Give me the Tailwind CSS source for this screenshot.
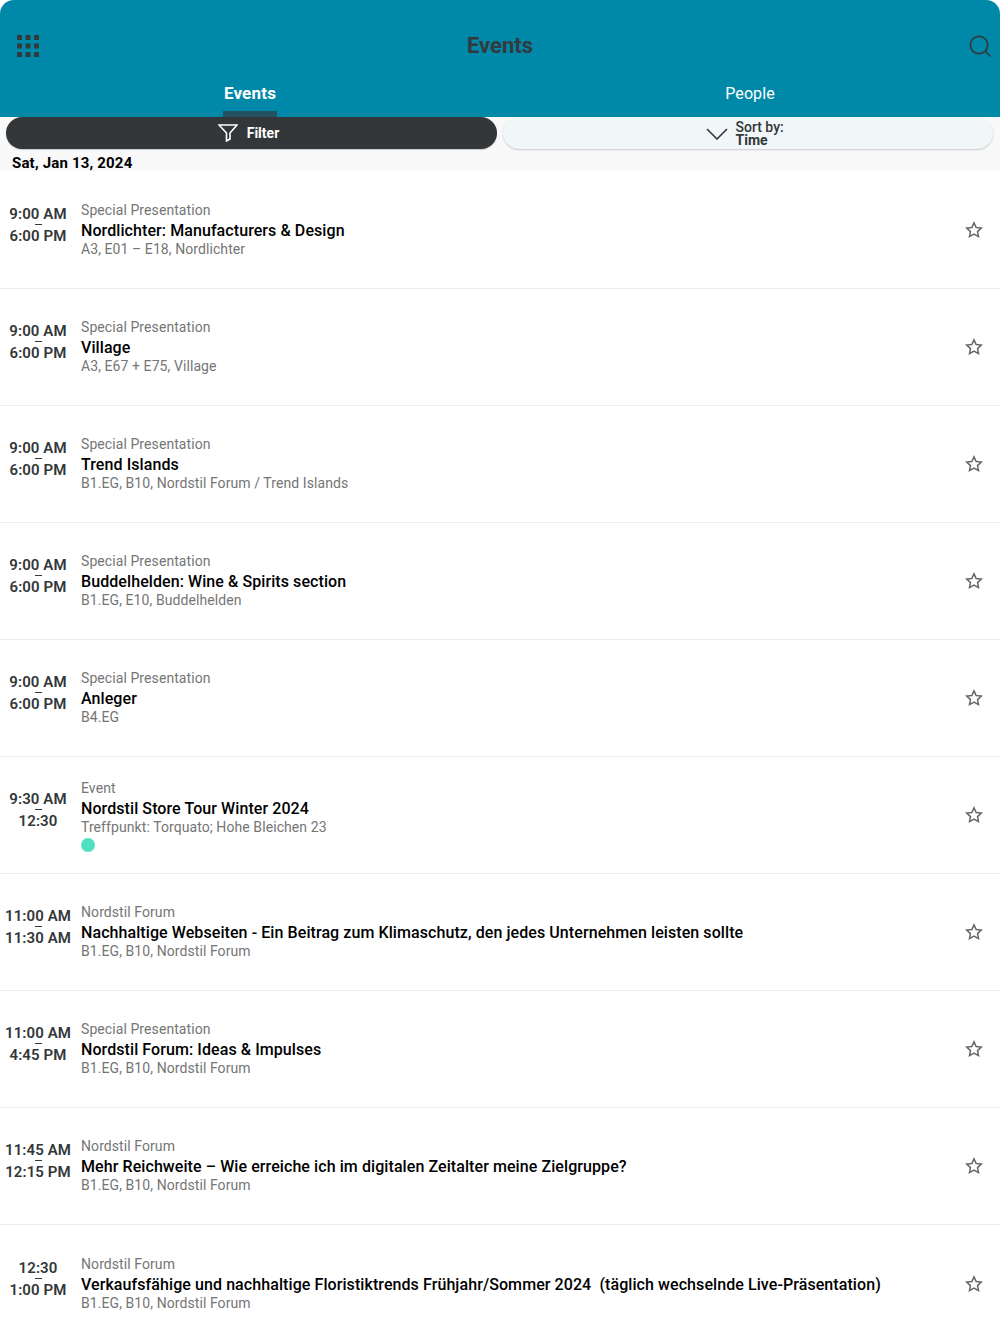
<!DOCTYPE html>
<html>
<head>
<meta charset="utf-8">
<script src="https://cdn.jsdelivr.net/npm/@tailwindcss/browser@4"></script>
</head>
<body class="bg-white overflow-hidden font-['Roboto',sans-serif]">
<div class="w-[1000px] h-[1334px] overflow-hidden">
  <header class="h-[117px] bg-[#0088a9] rounded-t-[14px] flex flex-col">
    <div class="h-[75px] pt-[16px] grid grid-cols-[1fr_auto_1fr] items-center pl-[17px] pr-[9px]">
      <svg class="w-[22px] h-[22px]" viewBox="0 0 22 22" fill="#333a3d">
        <rect x="0" y="0" width="5" height="5"/><rect x="8.5" y="0" width="5" height="5"/><rect x="17" y="0" width="5" height="5"/>
        <rect x="0" y="8.5" width="5" height="5"/><rect x="8.5" y="8.5" width="5" height="5"/><rect x="17" y="8.5" width="5" height="5"/>
        <rect x="0" y="17" width="5" height="5"/><rect x="8.5" y="17" width="5" height="5"/><rect x="17" y="17" width="5" height="5"/>
      </svg>
      <h1 class="text-[22px] font-bold text-[#333a3d] ml-[-8px]">Events</h1>
      <svg class="w-[22px] h-[22px] justify-self-end" viewBox="0 0 22 22" fill="none" stroke="#333a3d" stroke-width="1.7" stroke-linecap="round">
        <circle cx="10" cy="10" r="8.7"/><path d="M16.5 16.5 L21 21"/>
      </svg>
    </div>
    <nav class="flex-1 flex">
      <div class="w-1/2 flex flex-col items-center">
        <span class="text-[17px] leading-[20px] mt-[8px] font-bold text-white tracking-[0.2px]">Events</span>
        <span class="mt-auto w-[54px] h-[6px] bg-[#24505f]"></span>
      </div>
      <div class="w-1/2 flex flex-col items-center">
        <span class="text-[16px] leading-[20px] mt-[9px] text-white tracking-[0.1px]">People</span>
      </div>
    </nav>
  </header>
  <div class="h-[54px] bg-[#f9f9f9] relative">
    <div class="flex gap-[6px] pl-[6px] pr-[7px]">
      <button class="w-[491px] h-[32px] rounded-full bg-[#333739] text-white flex items-center justify-center gap-[9px] shadow-[0_1px_1px_rgba(0,0,0,0.2)] pr-[6px]">
        <svg class="w-[20px] h-[18px]" viewBox="0 0 20 18" fill="none" stroke="#fff" stroke-width="1.6" stroke-linejoin="miter"><path d="M1 1 H19 L12 9 V15 L8.5 17 V9 Z"/></svg>
        <span class="text-[14px] font-bold">Filter</span>
      </button>
      <button class="w-[490px] h-[32px] rounded-full bg-[#f1f6f9] text-[#333739] flex items-center justify-center gap-[8px] shadow-[0_1px_2px_rgba(0,0,0,0.2)] pr-[7px]">
        <svg class="w-[22px] h-[12px] mt-[1px]" viewBox="0 0 22 12" fill="none" stroke="#333739" stroke-width="1.6"><path d="M1 1 L11 11 L21 1"/></svg>
        <span class="flex flex-col text-left text-[14px] leading-[13.5px] w-[48px] mt-[2px] whitespace-nowrap"><span class="font-medium">Sort by:</span><span class="font-bold">Time</span></span>
      </button>
    </div>
    <div class="pl-[12px] mt-[5px] text-[15px] leading-[18px] font-bold text-black tracking-[0.18px]">Sat, Jan 13, 2024</div>
  </div>

  <main class="pt-px">
    <article class="h-[117px] border-b border-[#ececec] flex items-center">
      <div class="w-[75px] mb-[10px] shrink-0 text-center text-[#333739] text-[15px] font-semibold tracking-[0.1px] leading-[22px] relative pl-[1px]"><div>9:00 AM</div><div>6:00 PM</div><span class="absolute left-[35px] top-[21px] w-[7px] h-px bg-[#333739]"></span></div>
      <div class="ml-[6px] flex-1 tracking-[0.08px]"><div class="text-[14px] leading-[19px] text-[#757575]">Special Presentation</div><div class="text-[16px] leading-[20px] mt-px font-medium text-black">Nordlichter: Manufacturers &amp; Design</div><div class="text-[14px] leading-[19px] mt-[-1px] text-[#757575]">A3, E01 – E18, Nordlichter</div></div>
      <svg class="w-[18px] h-[18px] mr-[17px]" viewBox="0 0 24 24" fill="none" stroke="#666" stroke-width="2"><path d="M12 2.5l2.9 6.2 6.8.8-5 4.6 1.3 6.7-6-3.4-6 3.4 1.3-6.7-5-4.6 6.8-.8z"/></svg>
    </article>
    <article class="h-[117px] border-b border-[#ececec] flex items-center">
      <div class="w-[75px] mb-[10px] shrink-0 text-center text-[#333739] text-[15px] font-semibold tracking-[0.1px] leading-[22px] relative pl-[1px]"><div>9:00 AM</div><div>6:00 PM</div><span class="absolute left-[35px] top-[21px] w-[7px] h-px bg-[#333739]"></span></div>
      <div class="ml-[6px] flex-1 tracking-[0.08px]"><div class="text-[14px] leading-[19px] text-[#757575]">Special Presentation</div><div class="text-[16px] leading-[20px] mt-px font-medium text-black">Village</div><div class="text-[14px] leading-[19px] mt-[-1px] text-[#757575]">A3, E67 + E75, Village</div></div>
      <svg class="w-[18px] h-[18px] mr-[17px]" viewBox="0 0 24 24" fill="none" stroke="#666" stroke-width="2"><path d="M12 2.5l2.9 6.2 6.8.8-5 4.6 1.3 6.7-6-3.4-6 3.4 1.3-6.7-5-4.6 6.8-.8z"/></svg>
    </article>
    <article class="h-[117px] border-b border-[#ececec] flex items-center">
      <div class="w-[75px] mb-[10px] shrink-0 text-center text-[#333739] text-[15px] font-semibold tracking-[0.1px] leading-[22px] relative pl-[1px]"><div>9:00 AM</div><div>6:00 PM</div><span class="absolute left-[35px] top-[21px] w-[7px] h-px bg-[#333739]"></span></div>
      <div class="ml-[6px] flex-1 tracking-[0.08px]"><div class="text-[14px] leading-[19px] text-[#757575]">Special Presentation</div><div class="text-[16px] leading-[20px] mt-px font-medium text-black">Trend Islands</div><div class="text-[14px] leading-[19px] mt-[-1px] text-[#757575]">B1.EG, B10, Nordstil Forum / Trend Islands</div></div>
      <svg class="w-[18px] h-[18px] mr-[17px]" viewBox="0 0 24 24" fill="none" stroke="#666" stroke-width="2"><path d="M12 2.5l2.9 6.2 6.8.8-5 4.6 1.3 6.7-6-3.4-6 3.4 1.3-6.7-5-4.6 6.8-.8z"/></svg>
    </article>
    <article class="h-[117px] border-b border-[#ececec] flex items-center">
      <div class="w-[75px] mb-[10px] shrink-0 text-center text-[#333739] text-[15px] font-semibold tracking-[0.1px] leading-[22px] relative pl-[1px]"><div>9:00 AM</div><div>6:00 PM</div><span class="absolute left-[35px] top-[21px] w-[7px] h-px bg-[#333739]"></span></div>
      <div class="ml-[6px] flex-1 tracking-[0.08px]"><div class="text-[14px] leading-[19px] text-[#757575]">Special Presentation</div><div class="text-[16px] leading-[20px] mt-px font-medium text-black">Buddelhelden: Wine &amp; Spirits section</div><div class="text-[14px] leading-[19px] mt-[-1px] text-[#757575]">B1.EG, E10, Buddelhelden</div></div>
      <svg class="w-[18px] h-[18px] mr-[17px]" viewBox="0 0 24 24" fill="none" stroke="#666" stroke-width="2"><path d="M12 2.5l2.9 6.2 6.8.8-5 4.6 1.3 6.7-6-3.4-6 3.4 1.3-6.7-5-4.6 6.8-.8z"/></svg>
    </article>
    <article class="h-[117px] border-b border-[#ececec] flex items-center">
      <div class="w-[75px] mb-[10px] shrink-0 text-center text-[#333739] text-[15px] font-semibold tracking-[0.1px] leading-[22px] relative pl-[1px]"><div>9:00 AM</div><div>6:00 PM</div><span class="absolute left-[35px] top-[21px] w-[7px] h-px bg-[#333739]"></span></div>
      <div class="ml-[6px] flex-1 tracking-[0.08px]"><div class="text-[14px] leading-[19px] text-[#757575]">Special Presentation</div><div class="text-[16px] leading-[20px] mt-px font-medium text-black">Anleger</div><div class="text-[14px] leading-[19px] mt-[-1px] text-[#757575]">B4.EG</div></div>
      <svg class="w-[18px] h-[18px] mr-[17px]" viewBox="0 0 24 24" fill="none" stroke="#666" stroke-width="2"><path d="M12 2.5l2.9 6.2 6.8.8-5 4.6 1.3 6.7-6-3.4-6 3.4 1.3-6.7-5-4.6 6.8-.8z"/></svg>
    </article>
    <article class="h-[117px] border-b border-[#ececec] flex items-center">
      <div class="w-[75px] mb-[10px] shrink-0 text-center text-[#333739] text-[15px] font-semibold tracking-[0.1px] leading-[22px] relative pl-[1px]"><div>9:30 AM</div><div>12:30</div><span class="absolute left-[35px] top-[21px] w-[7px] h-px bg-[#333739]"></span></div>
      <div class="ml-[6px] flex-1 tracking-[0.08px]"><div class="text-[14px] leading-[19px] text-[#757575]">Event</div><div class="text-[16px] leading-[20px] mt-px font-medium text-black">Nordstil Store Tour Winter 2024</div><div class="text-[14px] leading-[19px] mt-[-1px] text-[#757575]">Treffpunkt: Torquato; Hohe Bleichen 23</div><div class="w-[14px] h-[14px] mt-[1px] rounded-full bg-[#4fe0c0]"></div></div>
      <svg class="w-[18px] h-[18px] mr-[17px]" viewBox="0 0 24 24" fill="none" stroke="#666" stroke-width="2"><path d="M12 2.5l2.9 6.2 6.8.8-5 4.6 1.3 6.7-6-3.4-6 3.4 1.3-6.7-5-4.6 6.8-.8z"/></svg>
    </article>
    <article class="h-[117px] border-b border-[#ececec] flex items-center">
      <div class="w-[75px] mb-[10px] shrink-0 text-center text-[#333739] text-[15px] font-semibold tracking-[0.1px] leading-[22px] relative pl-[1px]"><div>11:00 AM</div><div>11:30 AM</div><span class="absolute left-[35px] top-[21px] w-[7px] h-px bg-[#333739]"></span></div>
      <div class="ml-[6px] flex-1 tracking-[0.08px]"><div class="text-[14px] leading-[19px] text-[#757575]">Nordstil Forum</div><div class="text-[16px] leading-[20px] mt-px font-medium text-black">Nachhaltige Webseiten - Ein Beitrag zum Klimaschutz, den jedes Unternehmen leisten sollte</div><div class="text-[14px] leading-[19px] mt-[-1px] text-[#757575]">B1.EG, B10, Nordstil Forum</div></div>
      <svg class="w-[18px] h-[18px] mr-[17px]" viewBox="0 0 24 24" fill="none" stroke="#666" stroke-width="2"><path d="M12 2.5l2.9 6.2 6.8.8-5 4.6 1.3 6.7-6-3.4-6 3.4 1.3-6.7-5-4.6 6.8-.8z"/></svg>
    </article>
    <article class="h-[117px] border-b border-[#ececec] flex items-center">
      <div class="w-[75px] mb-[10px] shrink-0 text-center text-[#333739] text-[15px] font-semibold tracking-[0.1px] leading-[22px] relative pl-[1px]"><div>11:00 AM</div><div>4:45 PM</div><span class="absolute left-[35px] top-[21px] w-[7px] h-px bg-[#333739]"></span></div>
      <div class="ml-[6px] flex-1 tracking-[0.08px]"><div class="text-[14px] leading-[19px] text-[#757575]">Special Presentation</div><div class="text-[16px] leading-[20px] mt-px font-medium text-black">Nordstil Forum: Ideas &amp; Impulses</div><div class="text-[14px] leading-[19px] mt-[-1px] text-[#757575]">B1.EG, B10, Nordstil Forum</div></div>
      <svg class="w-[18px] h-[18px] mr-[17px]" viewBox="0 0 24 24" fill="none" stroke="#666" stroke-width="2"><path d="M12 2.5l2.9 6.2 6.8.8-5 4.6 1.3 6.7-6-3.4-6 3.4 1.3-6.7-5-4.6 6.8-.8z"/></svg>
    </article>
    <article class="h-[117px] border-b border-[#ececec] flex items-center">
      <div class="w-[75px] mb-[10px] shrink-0 text-center text-[#333739] text-[15px] font-semibold tracking-[0.1px] leading-[22px] relative pl-[1px]"><div>11:45 AM</div><div>12:15 PM</div><span class="absolute left-[35px] top-[21px] w-[7px] h-px bg-[#333739]"></span></div>
      <div class="ml-[6px] flex-1 tracking-[0.08px]"><div class="text-[14px] leading-[19px] text-[#757575]">Nordstil Forum</div><div class="text-[16px] leading-[20px] mt-px font-medium text-black">Mehr Reichweite – Wie erreiche ich im digitalen Zeitalter meine Zielgruppe?</div><div class="text-[14px] leading-[19px] mt-[-1px] text-[#757575]">B1.EG, B10, Nordstil Forum</div></div>
      <svg class="w-[18px] h-[18px] mr-[17px]" viewBox="0 0 24 24" fill="none" stroke="#666" stroke-width="2"><path d="M12 2.5l2.9 6.2 6.8.8-5 4.6 1.3 6.7-6-3.4-6 3.4 1.3-6.7-5-4.6 6.8-.8z"/></svg>
    </article>
    <article class="h-[117px] flex items-center">
      <div class="w-[75px] mb-[10px] shrink-0 text-center text-[#333739] text-[15px] font-semibold tracking-[0.1px] leading-[22px] relative pl-[1px]"><div>12:30</div><div>1:00 PM</div><span class="absolute left-[35px] top-[21px] w-[7px] h-px bg-[#333739]"></span></div>
      <div class="ml-[6px] flex-1 tracking-[0.08px]"><div class="text-[14px] leading-[19px] text-[#757575]">Nordstil Forum</div><div class="text-[16px] leading-[20px] mt-px font-medium text-black whitespace-pre">Verkaufsfähige und nachhaltige Floristiktrends Frühjahr/Sommer 2024  (täglich wechselnde Live-Präsentation)</div><div class="text-[14px] leading-[19px] mt-[-1px] text-[#757575]">B1.EG, B10, Nordstil Forum</div></div>
      <svg class="w-[18px] h-[18px] mr-[17px]" viewBox="0 0 24 24" fill="none" stroke="#666" stroke-width="2"><path d="M12 2.5l2.9 6.2 6.8.8-5 4.6 1.3 6.7-6-3.4-6 3.4 1.3-6.7-5-4.6 6.8-.8z"/></svg>
    </article>
  </main>
</div>
</body>
</html>
